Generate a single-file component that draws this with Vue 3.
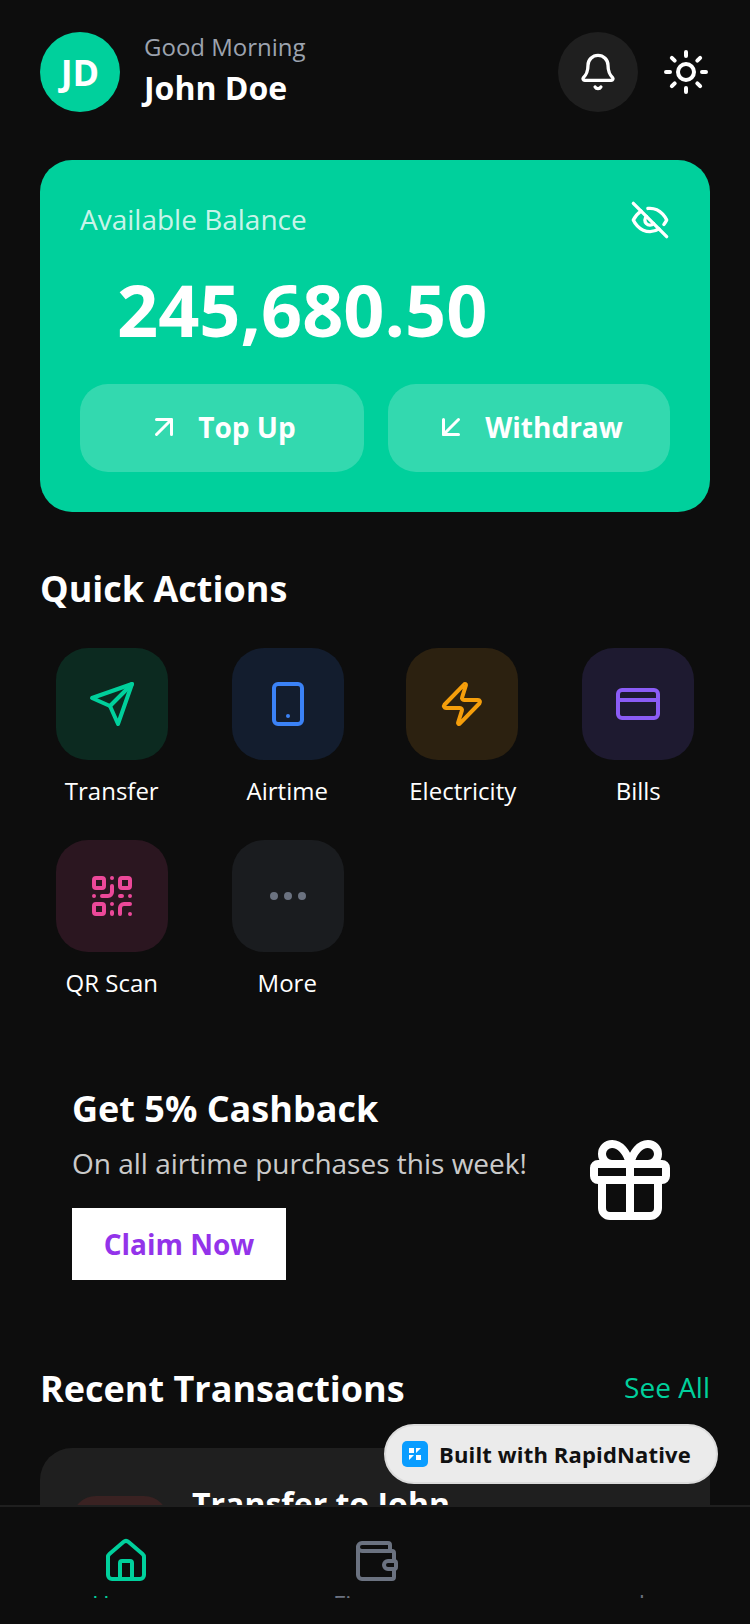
<script setup>
const actions = [
  { label: 'Transfer', tone: 'green', icon: 'send' },
  { label: 'Airtime', tone: 'blue', icon: 'phone' },
  { label: 'Electricity', tone: 'orange', icon: 'zap' },
  { label: 'Bills', tone: 'purple', icon: 'card' },
  { label: 'QR Scan', tone: 'pink', icon: 'qr' },
  { label: 'More', tone: 'gray', icon: 'more' },
]
</script>

<template>
  <div class="app">
    <div class="scroll">
      <header class="header">
        <div class="user">
          <div class="avatar">JD</div>
          <div class="user-text">
            <div class="greeting">Good Morning</div>
            <div class="name">John Doe</div>
          </div>
        </div>
        <div class="header-actions">
          <div class="bell">
            <svg class="i40" viewBox="0 0 24 24"><path d="M10.268 21a2 2 0 0 0 3.464 0" /><path d="M3.262 15.326A1 1 0 0 0 4 17h16a1 1 0 0 0 .74-1.673C19.41 13.956 18 12.499 18 8A6 6 0 0 0 6 8c0 4.499-1.411 5.956-2.738 7.326" /></svg>
          </div>
          <svg class="i48 sun" viewBox="0 0 24 24"><circle cx="12" cy="12" r="4" /><path d="M12 2v2M12 20v2M4.93 4.93l1.41 1.41M17.66 17.66l1.41 1.41M2 12h2M20 12h2M6.34 17.66l-1.41 1.41M19.07 4.93l-1.41 1.41" /></svg>
        </div>
      </header>

      <section class="balance">
        <div class="balance-top">
          <span class="balance-label">Available Balance</span>
          <svg class="i40" viewBox="0 0 24 24"><path d="M9.88 9.88a3 3 0 1 0 4.24 4.24" /><path d="M10.73 5.08A10.43 10.43 0 0 1 12 5c7 0 10 7 10 7a13.16 13.16 0 0 1-1.67 2.68" /><path d="M6.61 6.61A13.526 13.526 0 0 0 2 12s3 7 10 7a9.74 9.74 0 0 0 5.39-1.61" /><path d="M2 2l20 20" /></svg>
        </div>
        <div class="amount">245,680.50</div>
        <div class="balance-buttons">
          <div class="balance-btn first">
            <svg class="i36" viewBox="0 0 24 24"><path d="M7 7h10v10" /><path d="M7 17 17 7" /></svg>
            <span>Top Up</span>
          </div>
          <div class="balance-btn">
            <svg class="i36" viewBox="0 0 24 24"><path d="M17 7 7 17" /><path d="M17 17H7V7" /></svg>
            <span>Withdraw</span>
          </div>
        </div>
      </section>

      <h2 class="section-title quick-title">Quick Actions</h2>
      <div class="actions">
        <div v-for="a in actions" :key="a.label" class="action">
          <div class="tile" :class="a.tone">
            <svg class="i48" viewBox="0 0 24 24">
              <template v-if="a.icon === 'send'"><path d="m22 2-7 20-4-9-9-4Z" /><path d="M22 2 11 13" /></template>
              <template v-else-if="a.icon === 'phone'"><rect x="5" y="2" width="14" height="20" rx="2" /><path d="M12 18h.01" /></template>
              <template v-else-if="a.icon === 'zap'"><path d="M4 14a1 1 0 0 1-.78-1.63l9.9-10.2a.5.5 0 0 1 .86.46l-1.92 6.02A1 1 0 0 0 13 10h7a1 1 0 0 1 .78 1.63l-9.9 10.2a.5.5 0 0 1-.86-.46l1.92-6.02A1 1 0 0 0 11 14z" /></template>
              <template v-else-if="a.icon === 'card'"><rect x="2" y="5" width="20" height="14" rx="2" /><path d="M2 10h20" /></template>
              <template v-else-if="a.icon === 'qr'"><rect x="3" y="3" width="5" height="5" rx="1" /><rect x="16" y="3" width="5" height="5" rx="1" /><rect x="3" y="16" width="5" height="5" rx="1" /><path d="M21 16h-3a2 2 0 0 0-2 2v3M21 21v.01M12 7v3a2 2 0 0 1-2 2H7M3 12h.01M12 3h.01M12 16v.01M16 12h1M21 12v.01M12 21v-1" /></template>
              <template v-else><circle cx="12" cy="12" r="1" /><circle cx="19" cy="12" r="1" /><circle cx="5" cy="12" r="1" /></template>
            </svg>
          </div>
          <div class="action-label">{{ a.label }}</div>
        </div>
      </div>

      <section class="promo">
        <div class="promo-text">
          <div class="promo-title">Get 5% Cashback</div>
          <div class="promo-desc">On all airtime purchases this week!</div>
          <div class="claim">Claim Now</div>
        </div>
        <svg class="gift" viewBox="0 0 24 24"><rect x="3" y="8" width="18" height="4" rx="1" /><path d="M12 8v13" /><path d="M19 12v7a2 2 0 0 1-2 2H7a2 2 0 0 1-2-2v-7" /><path d="M7.5 8a2.5 2.5 0 0 1 0-5A4.8 8 0 0 1 12 8a4.8 8 0 0 1 4.5-5 2.5 2.5 0 0 1 0 5" /></svg>
      </section>

      <div class="recent-head">
        <h2 class="section-title">Recent Transactions</h2>
        <span class="see-all">See All</span>
      </div>
      <div class="tx-card">
        <div class="tx-icon"></div>
        <div class="tx-title">Transfer to John</div>
      </div>
    </div>

    <nav class="tabs">
      <div class="tab active">
        <svg class="i48" viewBox="0 0 24 24"><path d="M15 21v-8a1 1 0 0 0-1-1h-4a1 1 0 0 0-1 1v8" /><path d="M3 10a2 2 0 0 1 .709-1.528l7-5.999a2 2 0 0 1 2.582 0l7 5.999A2 2 0 0 1 21 10v9a2 2 0 0 1-2 2H5a2 2 0 0 1-2-2z" /></svg>
        <div class="tab-clip"><div class="tab-label">Home</div></div>
      </div>
      <div class="tab">
        <svg class="i48" viewBox="0 0 24 24"><path d="M19 7V4a1 1 0 0 0-1-1H5a2 2 0 0 0 0 4h15a1 1 0 0 1 1 1v4h-3a2 2 0 0 0 0 4h3a1 1 0 0 0 1-1v-2a1 1 0 0 0-1-1" /><path d="M3 5v14a2 2 0 0 0 2 2h15a1 1 0 0 0 1-1v-4" /></svg>
        <div class="tab-clip"><div class="tab-label">Finance</div></div>
      </div>
      <div class="tab">
        <div class="i48"></div>
        <div class="tab-clip"><div class="tab-label">cards</div></div>
      </div>
    </nav>

    <div class="badge">
      <svg class="badge-logo" viewBox="0 0 26 26"><rect width="26" height="26" rx="5" fill="#0a9dff" /><path d="M7 7h5v5H7zM14 7h5l-5 5zM7 19v-5h5zM14 14h5v5h-5z" fill="#fff" /></svg>
      <span>Built with RapidNative</span>
    </div>
  </div>
</template>

<style>
html, body { margin: 0; background: #0d0d0d; }
</style>

<style scoped>
.app {
  position: relative;
  width: 750px;
  height: 1624px;
  display: flex;
  flex-direction: column;
  overflow: hidden;
  background: #0d0d0d;
  color: #fff;
  font-family: "Open Sans", sans-serif;
}
svg { fill: none; stroke: currentColor; stroke-width: 2; stroke-linecap: round; stroke-linejoin: round; flex: none; display: block; }
.i36 { width: 36px; height: 36px; }
.i40 { width: 40px; height: 40px; }
.i48 { width: 48px; height: 48px; flex: none; }
.scroll { flex: 1; min-height: 0; overflow: hidden; padding: 32px 40px 0; }

.header { display: flex; justify-content: space-between; align-items: center; height: 80px; }
.user { display: flex; align-items: center; gap: 24px; }
.avatar { width: 80px; height: 80px; border-radius: 50%; background: #00d09c; display: flex; align-items: center; justify-content: center; font-size: 36px; font-weight: 700; }
.user-text { margin-bottom: 3px; }
.greeting { font-size: 24px; line-height: 32px; color: #9ca3af; }
.name { font-size: 32px; line-height: 44px; font-weight: 700; margin-top: 3px; }
.header-actions { display: flex; align-items: center; gap: 24px; }
.bell { width: 80px; height: 80px; border-radius: 50%; background: #1f1f1f; display: flex; align-items: center; justify-content: center; }

.balance { margin-top: 48px; height: 352px; box-sizing: border-box; background: #00d09c; border-radius: 32px; padding: 40px; }
.balance-top { display: flex; justify-content: space-between; align-items: center; height: 40px; }
.balance-label { font-size: 28px; color: rgba(255,255,255,.8); margin-bottom: 2px; }
.amount { font-size: 72px; line-height: 96px; font-weight: 700; margin-top: 21px; padding-left: 37px; }
.balance-buttons { display: flex; gap: 24px; margin-top: 27px; }
.balance-btn { flex: 1; height: 88px; box-sizing: border-box; padding: 0 2px 2px 0; border-radius: 28px; background: rgba(255,255,255,.2); display: flex; align-items: center; justify-content: center; gap: 16px; font-size: 28px; font-weight: 700; }
.balance-btn.first { flex: none; width: 284px; }

.section-title { margin: 0; font-size: 36px; line-height: 48px; font-weight: 700; }
.quick-title { margin-top: 53px; }
.actions { display: flex; flex-wrap: wrap; margin: 35px -16px 0; }
.action { width: 25%; height: 192px; display: flex; flex-direction: column; align-items: center; }
.tile { width: 112px; height: 112px; flex: none; border-radius: 32px; display: flex; align-items: center; justify-content: center; }
.action:nth-child(4n + 2) .tile { margin-left: 1px; }
.action:nth-child(4n + 3) .tile { margin-right: 1px; }
.action-label { margin-top: 12px; font-size: 24px; line-height: 38px; color: #fff; white-space: nowrap; }
.green { background: #0c2a20; color: #00d09c; }
.blue { background: #131d2e; color: #3b82f6; }
.orange { background: #2c2110; color: #f59e0b; }
.purple { background: #1e1a30; color: #8b5cf6; }
.pink { background: #2b1620; color: #ec4899; }
.gray { background: #1a1c1f; color: #6b7280; }

.promo { display: flex; justify-content: space-between; align-items: center; margin-top: 21px; padding: 32px; }
.promo-title { font-size: 36px; line-height: 48px; font-weight: 700; }
.promo-desc { font-size: 28px; line-height: 40px; margin-top: 10px; color: rgba(255,255,255,.8); }
.claim { margin-top: 25px; width: 214px; height: 72px; background: #fff; color: #9333ea; display: flex; align-items: center; justify-content: center; font-size: 28px; font-weight: 700; }
.gift { width: 96px; height: 96px; margin-bottom: 5px; }

.recent-head { display: flex; justify-content: space-between; align-items: center; margin-top: 53px; }
.see-all { font-size: 28px; color: #00d09c; margin-bottom: 4px; }
.tx-card { margin-top: 35px; height: 200px; box-sizing: border-box; background: #1f1f1f; border-radius: 32px; padding: 34px 32px; display: flex; gap: 24px; }
.tx-icon { width: 96px; height: 96px; border-radius: 24px; margin-top: 14px; background: #3a2222; flex: none; }
.tx-title { font-size: 32px; line-height: 44px; font-weight: 700; }

.tabs { height: 119px; box-sizing: border-box; border-top: 2px solid #1f1f1f; background: #0d0d0d; display: flex; padding: 30px 0 0 1px; color: #6b7280; }
.tab { flex: none; width: 250px; display: flex; flex-direction: column; align-items: center; }
.tab.active { color: #00d09c; }
.tab-clip { margin-top: 10px; height: 3px; width: 100%; overflow: hidden; text-align: center; }
.tab-label { font-size: 24px; line-height: 24px; margin-top: -3px; }

.badge { position: absolute; left: 384px; top: 1424px; width: 334px; height: 60px; box-sizing: border-box; border: 2px solid #dcdcdc; border-radius: 30px; background: #ebebeb; color: #111; display: flex; align-items: center; gap: 11px; padding-left: 16px; font-size: 22px; font-weight: 700; letter-spacing: .15px; }
.badge-logo { width: 26px; height: 26px; stroke: none; }
</style>
